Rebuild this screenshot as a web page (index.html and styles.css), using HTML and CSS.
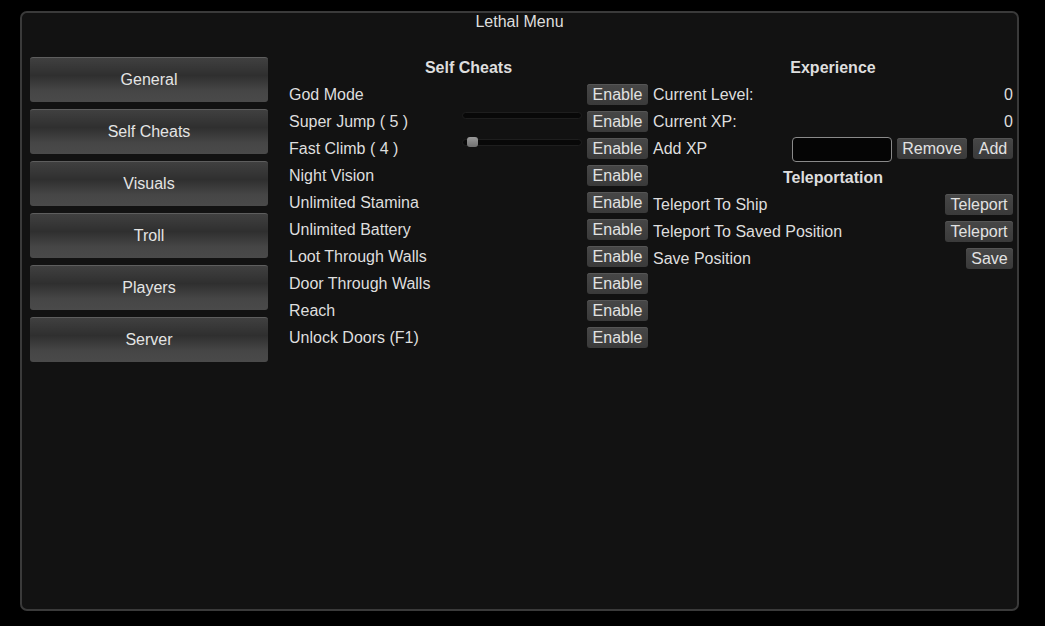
FILE: index.html
```html
<!DOCTYPE html>
<html>
<head>
<meta charset="utf-8">
<title>Lethal Menu</title>
<link rel="stylesheet" href="styles.css">
</head>
<body>
<div class="window">
  <div class="title">Lethal Menu</div>
  <div class="main">
    <nav class="sidebar">
      <div class="tab">General</div>
      <div class="tab">Self Cheats</div>
      <div class="tab">Visuals</div>
      <div class="tab">Troll</div>
      <div class="tab">Players</div>
      <div class="tab">Server</div>
    </nav>
    <section class="col col-left">
      <div class="header">Self Cheats</div>
      <div class="row"><span class="label">God Mode</span><span class="btn btn-enable">Enable</span></div>
      <div class="row"><span class="label">Super Jump ( 5 )</span><span class="slider"></span><span class="btn btn-enable">Enable</span></div>
      <div class="row"><span class="label">Fast Climb ( 4 )</span><span class="slider"><span class="thumb"></span></span><span class="btn btn-enable">Enable</span></div>
      <div class="row"><span class="label">Night Vision</span><span class="btn btn-enable">Enable</span></div>
      <div class="row"><span class="label">Unlimited Stamina</span><span class="btn btn-enable">Enable</span></div>
      <div class="row"><span class="label">Unlimited Battery</span><span class="btn btn-enable">Enable</span></div>
      <div class="row"><span class="label">Loot Through Walls</span><span class="btn btn-enable">Enable</span></div>
      <div class="row"><span class="label">Door Through Walls</span><span class="btn btn-enable">Enable</span></div>
      <div class="row"><span class="label">Reach</span><span class="btn btn-enable">Enable</span></div>
      <div class="row"><span class="label">Unlock Doors (F1)</span><span class="btn btn-enable">Enable</span></div>
    </section>
    <section class="col col-right">
      <div class="header">Experience</div>
      <div class="row"><span class="label">Current Level:</span><span class="value">0</span></div>
      <div class="row"><span class="label">Current XP:</span><span class="value">0</span></div>
      <div class="row row-tall"><span class="label">Add XP</span><span class="field"></span><span class="btn btn-remove">Remove</span><span class="btn btn-add">Add</span></div>
      <div class="header">Teleportation</div>
      <div class="row"><span class="label">Teleport To Ship</span><span class="btn btn-tp">Teleport</span></div>
      <div class="row"><span class="label">Teleport To Saved Position</span><span class="btn btn-tp">Teleport</span></div>
      <div class="row"><span class="label">Save Position</span><span class="btn btn-save">Save</span></div>
    </section>
  </div>
</div>
</body>
</html>
```

FILE: styles.css
```css
html, body {
  margin: 0;
  padding: 0;
  background: #000;
}

body {
  font-family: "Liberation Sans", Arial, sans-serif;
  font-size: 16px;
  color: #dedede;
}

.window {
  box-sizing: border-box;
  margin: 11px 0 0 20px;
  width: 999px;
  height: 600px;
  border: 2px solid #3a3a3a;
  border-radius: 7px;
  background: #121212;
  padding: 0 4px 0 8px;
}

.title {
  text-align: center;
  height: 17px;
  line-height: 17px;
  margin-left: -8px;
  margin-right: -4px;
}

.main {
  display: flex;
  align-items: flex-start;
  margin-top: 27px;
}

.sidebar {
  width: 238px;
  display: flex;
  flex-direction: column;
  gap: 7px;
  margin-right: 21px;
  flex: none;
}

.tab {
  box-sizing: border-box;
  height: 45px;
  line-height: 44px;
  text-align: center;
  border-radius: 3px;
  border-top: 1px solid #5e5e5e;
  background: linear-gradient(#404040 0%, #2f2f2f 40%, #464646 75%, #4a4a4a 100%);
  color: #e4e4e4;
}

.col {
  display: flex;
  flex-direction: column;
  gap: 6px;
  flex: none;
}

.col-left {
  width: 359px;
  margin-right: 5px;
}

.col-right {
  width: 360px;
}

.header {
  height: 21px;
  line-height: 21px;
  text-align: center;
  font-weight: bold;
}

.row {
  display: flex;
  align-items: flex-start;
  height: 21px;
}

.row-tall {
  height: 23px;
}

.label {
  flex: 1;
  line-height: 21px;
  white-space: nowrap;
}

.value {
  line-height: 21px;
}

.btn {
  box-sizing: border-box;
  height: 21px;
  line-height: 22px;
  text-align: center;
  border-radius: 3px;
  background: linear-gradient(#474747, #3a3a3a);
  box-shadow: inset 0 1px 0 #555;
  color: #e2e2e2;
  flex: none;
}

.btn-enable {
  width: 61px;
}

.btn-remove {
  width: 70px;
  margin-left: 5px;
}

.btn-add {
  width: 40px;
  margin-left: 6px;
}

.btn-tp {
  width: 68px;
}

.btn-save {
  width: 47px;
}

.field {
  box-sizing: border-box;
  width: 100px;
  height: 25px;
  margin-top: -1px;
  border: 1px solid #8a8a8a;
  border-radius: 4px;
  background: #050505;
  flex: none;
}

.slider {
  position: relative;
  box-sizing: border-box;
  width: 120px;
  height: 7px;
  margin-top: 1px;
  margin-right: 5px;
  border-radius: 4px;
  background: #080808;
  border: 1px solid #1e1e1e;
  flex: none;
}

.thumb {
  position: absolute;
  left: 4px;
  top: -3px;
  width: 11px;
  height: 10px;
  border-radius: 3px;
  background: linear-gradient(#9a9a9a, #707070);
}
```
